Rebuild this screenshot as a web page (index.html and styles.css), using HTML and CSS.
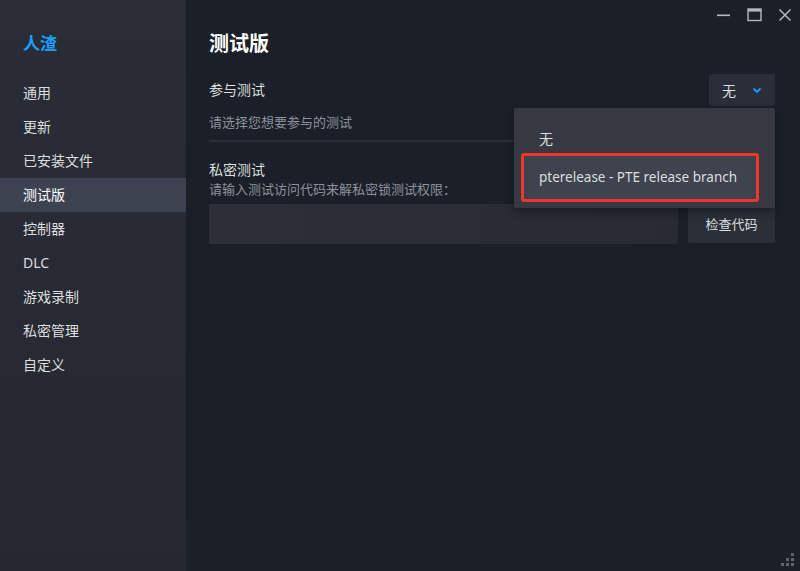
FILE: index.html
```html
<!DOCTYPE html>
<html lang="zh">
<head>
<meta charset="utf-8">
<title>测试版</title>
<link rel="stylesheet" href="styles.css">
</head>
<body>
<div class="window">
  <aside class="sidebar">
    <div class="game-title">人渣</div>
    <nav class="nav">
      <div class="nav-item">通用</div>
      <div class="nav-item">更新</div>
      <div class="nav-item">已安装文件</div>
      <div class="nav-item active">测试版</div>
      <div class="nav-item">控制器</div>
      <div class="nav-item">DLC</div>
      <div class="nav-item">游戏录制</div>
      <div class="nav-item">私密管理</div>
      <div class="nav-item">自定义</div>
    </nav>
  </aside>
  <main class="main">
    <div class="titlebar">
      <svg class="wc" width="14" height="14" viewBox="0 0 14 14"><rect x="0" y="6.5" width="13" height="1.6" fill="#b4b8bd"/></svg>
      <svg class="wc" width="15" height="14" viewBox="0 0 15 14"><rect x="1" y="1" width="13" height="11.5" fill="none" stroke="#b4b8bd" stroke-width="1.4"/><rect x="1" y="1" width="13" height="2.6" fill="#b4b8bd"/></svg>
      <svg class="wc" width="14" height="14" viewBox="0 0 14 14"><path d="M1.5 1.5 L12.5 12.5 M12.5 1.5 L1.5 12.5" stroke="#b4b8bd" stroke-width="1.5" fill="none"/></svg>
    </div>
    <h1 class="page-title">测试版</h1>
    <section class="beta-row">
      <div class="beta-head">
        <div class="label">参与测试</div>
        <div class="select">
          <span>无</span>
          <svg width="10" height="7" viewBox="0 0 10 7"><path d="M1.5 1.5 L5 5 L8.5 1.5" stroke="#1a9fff" stroke-width="1.8" fill="none"/></svg>
        </div>
      </div>
      <div class="hint">请选择您想要参与的测试</div>
      <div class="menu">
        <div class="menu-item">无</div>
        <div class="menu-item selected">pterelease - PTE release branch</div>
      </div>
    </section>
    <div class="divider"></div>
    <section class="private">
      <div class="label">私密测试</div>
      <div class="hint small">请输入测试访问代码来解私密锁测试权限：</div>
      <div class="code-row">
        <div class="code-input"></div>
        <div class="code-btn">检查代码</div>
      </div>
    </section>
    <div class="grip">
      <i></i><i></i><i></i><i></i><i></i><i></i>
    </div>
  </main>
</div>
</body>
</html>
```

FILE: styles.css
```css
* { box-sizing: border-box; }
html, body { margin: 0; padding: 0; }
body {
  width: 800px;
  height: 571px;
  overflow: hidden;
  background: #1b1f28;
  font-family: "Noto Sans", "Noto Sans CJK SC", sans-serif;
  color: #dcdedf;
}
.window {
  display: flex;
  width: 800px;
  height: 571px;
}
.sidebar {
  width: 186px;
  flex: none;
  background: linear-gradient(180deg, #2a2d36 0%, #262830 100%);
  padding-top: 31px;
}
.game-title {
  color: #1a9fff;
  font-size: 17px;
  font-weight: 700;
  padding-left: 23px;
  line-height: 26px;
  height: 26px;
}
.nav {
  margin-top: 19px;
}
.nav-item {
  height: 34px;
  line-height: 34px;
  padding-left: 23px;
  font-size: 14px;
  color: #dcdedf;
}
.nav-item.active {
  background: #3d4250;
  color: #ffffff;
}
.main {
  flex: 1;
  position: relative;
  padding: 0 25px 0 23px;
}
.titlebar {
  display: flex;
  justify-content: flex-end;
  gap: 16px;
  height: 30px;
  padding-top: 8px;
  margin-right: -17px;
}
.wc { display: block; }
.page-title {
  margin: 0;
  font-size: 20px;
  font-weight: 700;
  color: #ffffff;
  line-height: 28px;
  height: 28px;
}
.beta-row {
  position: relative;
  margin-top: 16px;
}
.beta-head {
  display: flex;
  justify-content: space-between;
  align-items: center;
  height: 32px;
}
.label {
  font-size: 14px;
  color: #dcdedf;
  line-height: 20px;
}
.select {
  width: 66px;
  height: 32px;
  background: #2a2e38;
  border-radius: 2px;
  display: flex;
  align-items: center;
  padding-left: 13px;
  gap: 16px;
  font-size: 14px;
  color: #dcdedf;
}
.select svg { display: block; margin-top: 1px; }
.hint {
  font-size: 13px;
  color: #8b929a;
  line-height: 18px;
  margin-top: 7px;
}
.hint.small { margin-top: 0; }
.menu {
  position: absolute;
  right: 0;
  top: 34px;
  width: 261px;
  height: 100px;
  background: #363941;
  border-radius: 2px;
  padding: 17px 0 0 7px;
  box-shadow: 0 4px 10px rgba(0,0,0,0.35);
  z-index: 2;
}
.menu-item {
  font-size: 14px;
  color: #dcdedf;
  padding-left: 18px;
  height: 28px;
  line-height: 28px;
}
.menu-item.selected {
  width: 238px;
  height: 49px;
  line-height: 43px;
  border: 3px solid #f0342f;
  border-radius: 3px;
  background: #3f434d;
  padding-left: 15px;
  font-size: 13.5px;
}
.divider {
  height: 2px;
  background: #2b2f38;
  margin-top: 9px;
}
.private {
  margin-top: 18px;
}
.code-row {
  display: flex;
  gap: 10px;
  margin-top: 6px;
}
.code-input {
  flex: 1;
  height: 40px;
  background: linear-gradient(90deg, #2c2f38 0%, #282b34 100%);
  border-radius: 2px;
}
.code-btn {
  width: 87px;
  height: 39px;
  background: #2b2f38;
  border-radius: 2px;
  display: flex;
  align-items: center;
  justify-content: center;
  font-size: 13px;
  color: #dcdedf;
}
.grip {
  position: absolute;
  right: 6px;
  bottom: 4px;
  width: 14px;
  height: 14px;
}
.grip i {
  position: absolute;
  width: 3px;
  height: 3px;
  background: #5d626b;
}
.grip i:nth-child(1) { right: 0; top: 0; }
.grip i:nth-child(2) { right: 0; top: 5px; }
.grip i:nth-child(3) { right: 5px; top: 5px; }
.grip i:nth-child(4) { right: 0; top: 10px; }
.grip i:nth-child(5) { right: 5px; top: 10px; }
.grip i:nth-child(6) { right: 10px; top: 10px; }
```
